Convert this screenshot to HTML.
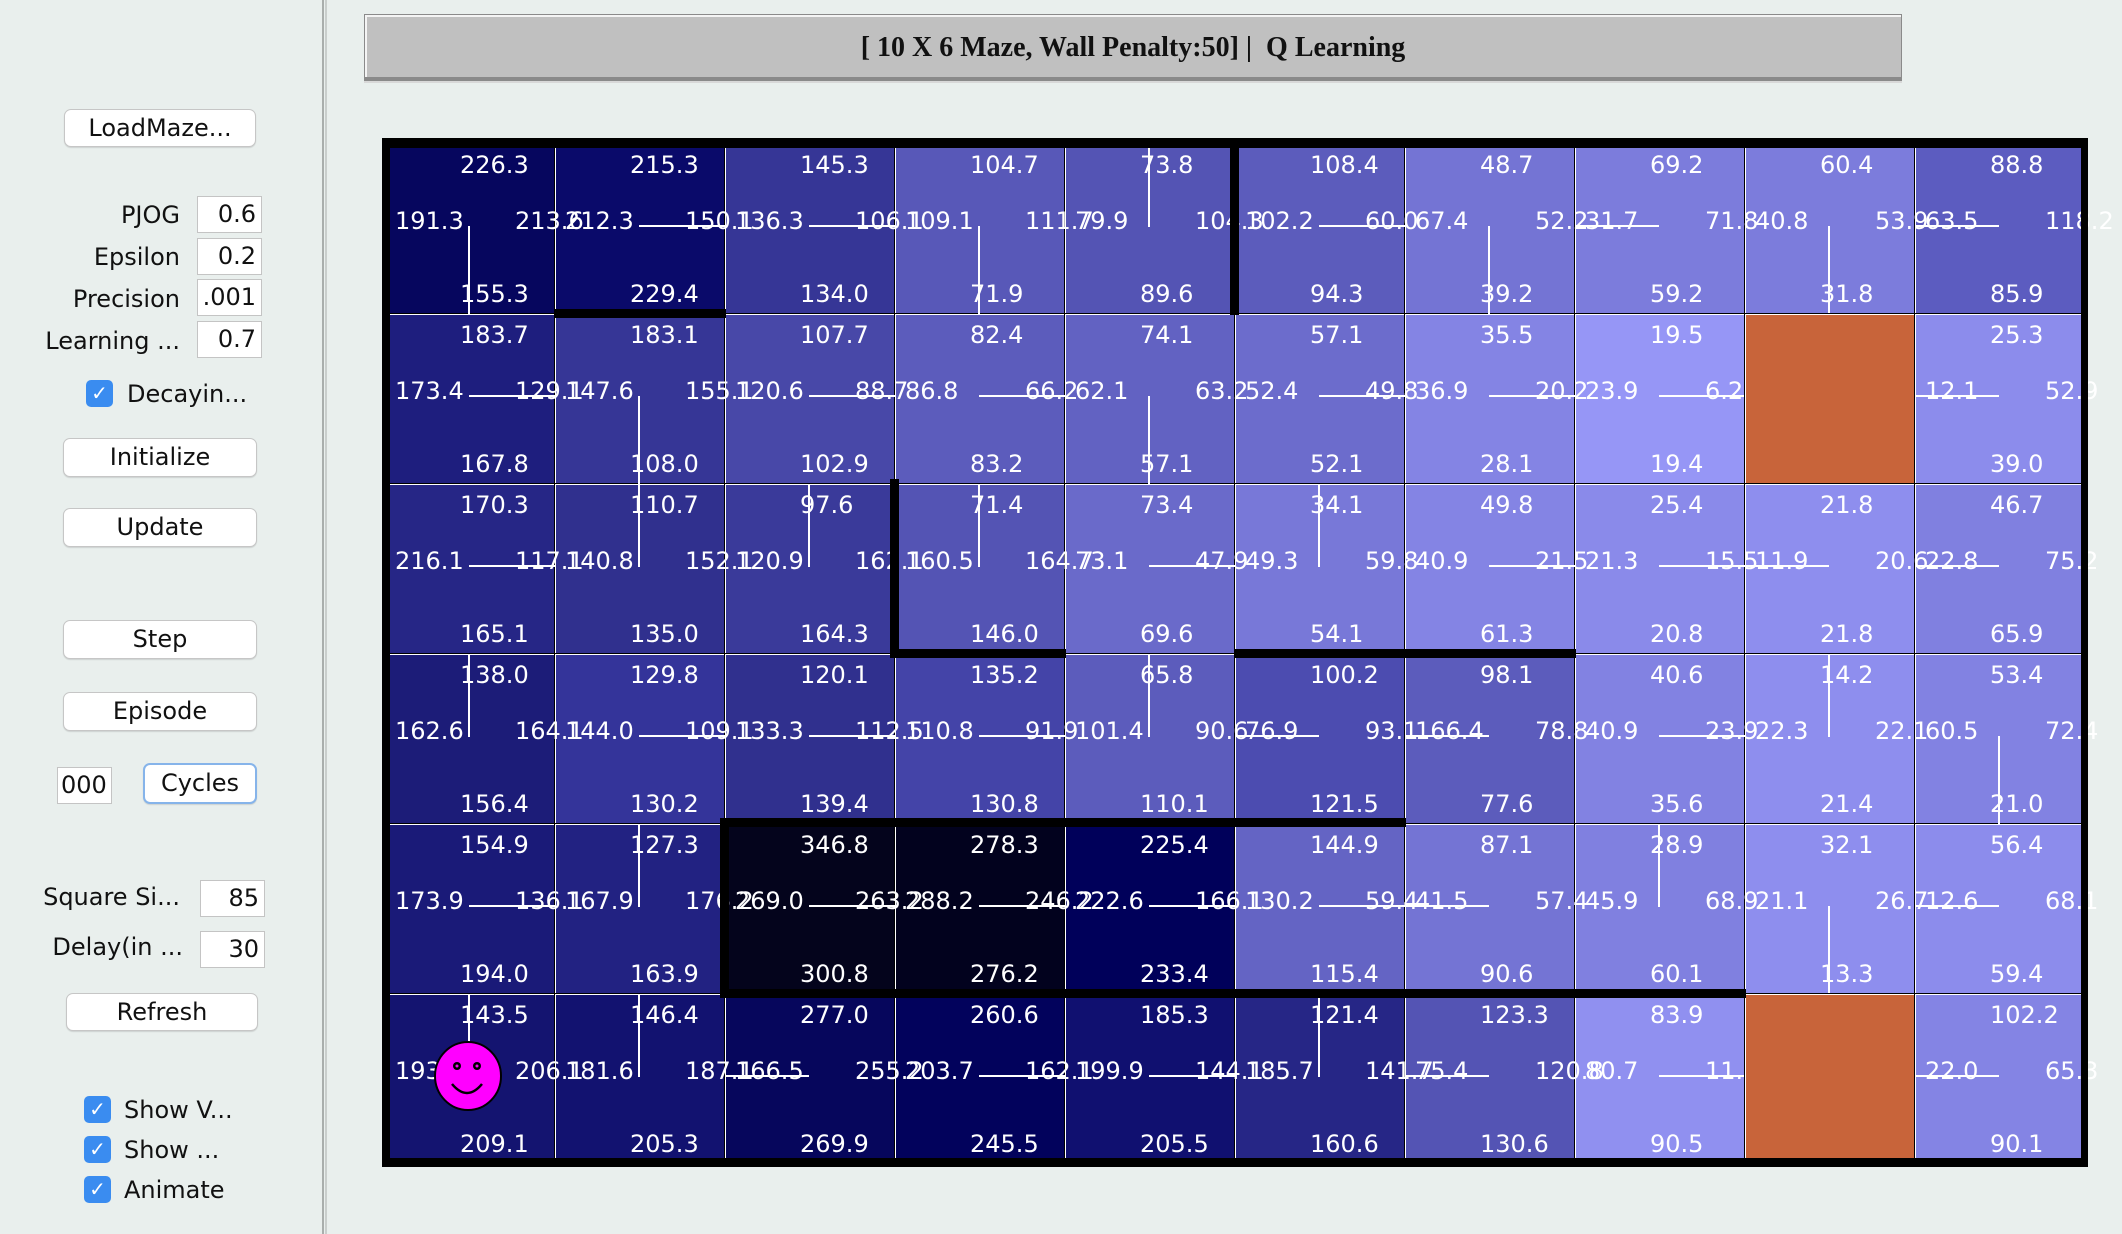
<!DOCTYPE html>
<html><head><meta charset="utf-8">
<style>
*{margin:0;padding:0;box-sizing:border-box}
body{width:2122px;height:1234px;background:#e9efed;position:relative;overflow:hidden;font-family:"DejaVu Sans","Liberation Sans",sans-serif;color:#111}
.a{position:absolute}
.btn{position:absolute;background:#fff;border:1px solid #c6c6c6;border-radius:7px;box-shadow:0 1px 1px rgba(0,0,0,.12);font-size:24px;text-align:center;line-height:37px}
.lab{position:absolute;font-size:24px;text-align:right;width:170px;left:10px;line-height:28px}
.fld{position:absolute;background:#fff;border:1px solid #c4c4c4;font-size:24px;text-align:right;padding-right:5px;line-height:34px;overflow:hidden;white-space:nowrap}
.cb{position:absolute;width:27px;height:27px;border-radius:5px;background:#3a8cf0;color:#fff;font-size:20px;line-height:27px;text-align:center;font-weight:bold}
.cbt{position:absolute;font-size:24px;line-height:28px}
#g{position:absolute;left:384px;top:143px;display:grid;grid-template-columns:repeat(10,170px);grid-auto-rows:170px}
.c{position:relative;border-left:1px solid #000;border-top:1px solid #000;box-shadow:inset 1px 1px 0 #fff}
.c i{position:absolute;z-index:2;font-style:normal;color:#fff;font-size:24px;line-height:24px;white-space:nowrap}
.t{left:75px;top:9px}.b{left:75px;top:138px}.l{left:10px;top:65px}.r{left:130px;top:65px}
.c b{position:absolute;z-index:2;background:#fff}
.U{left:83px;top:0;width:2px;height:83px}
.D{left:83px;top:82px;width:2px;height:88px}
.R{left:84px;top:81px;width:86px;height:2px}
.L{left:0;top:81px;width:84px;height:2px}
.o{background:#c8643a!important;z-index:3;position:relative}
.w{position:absolute;background:#000;z-index:5}
</style></head><body>
<div class="a" style="left:322px;top:0;width:2px;height:1234px;background:#a9aeac"></div>
<div class="a" style="left:325px;top:0;width:2px;height:1234px;background:#c9cecc"></div>

<div class="btn" style="left:64px;top:109px;width:192px;height:38px">LoadMaze...</div>
<div class="lab" style="top:201px">PJOG</div>
<div class="fld" style="left:197px;top:196px;width:65px;height:37px">0.6</div>
<div class="lab" style="top:243px">Epsilon</div>
<div class="fld" style="left:197px;top:238px;width:65px;height:37px">0.2</div>
<div class="lab" style="top:285px">Precision</div>
<div class="fld" style="left:197px;top:279px;width:65px;height:37px">.001</div>
<div class="lab" style="top:327px">Learning ...</div>
<div class="fld" style="left:197px;top:321px;width:65px;height:37px">0.7</div>
<div class="cb" style="left:86px;top:380px">✓</div>
<div class="cbt" style="left:127px;top:380px">Decayin...</div>
<div class="btn" style="left:63px;top:438px;width:194px;height:39px">Initialize</div>
<div class="btn" style="left:63px;top:508px;width:194px;height:39px">Update</div>
<div class="btn" style="left:63px;top:620px;width:194px;height:39px">Step</div>
<div class="btn" style="left:63px;top:692px;width:194px;height:39px">Episode</div>
<div class="fld" style="left:57px;top:767px;width:55px;height:37px;text-align:left;padding-left:3px">000</div>
<div class="btn" style="left:143px;top:763px;width:114px;height:41px;border:2px solid #86b4ea;line-height:37px">Cycles</div>
<div class="lab" style="top:883px">Square Si...</div>
<div class="fld" style="left:200px;top:880px;width:65px;height:37px">85</div>
<div class="lab" style="top:933px;left:13px">Delay(in ...</div>
<div class="fld" style="left:200px;top:931px;width:65px;height:37px">30</div>
<div class="btn" style="left:66px;top:993px;width:192px;height:38px">Refresh</div>
<div class="cb" style="left:84px;top:1096px">✓</div>
<div class="cbt" style="left:124px;top:1096px">Show V...</div>
<div class="cb" style="left:84px;top:1136px">✓</div>
<div class="cbt" style="left:124px;top:1136px">Show ...</div>
<div class="cb" style="left:84px;top:1176px">✓</div>
<div class="cbt" style="left:124px;top:1176px">Animate</div>

<div class="a" style="left:364px;top:14px;width:1538px;height:64px;background:#c0c0c0;border:1px solid #8a8a8a;box-shadow:inset 2px 2px 0 #f4f4f4"></div>
<div class="a" style="left:364px;top:78px;width:1538px;height:3px;background:#8a8a8a"></div>
<div class="a" style="left:364px;top:81px;width:1538px;height:2px;background:#d8d8d8"></div>
<div class="a" style="left:364px;top:31px;width:1538px;text-align:center;font-family:'Liberation Serif',serif;font-weight:bold;font-size:28px;line-height:34px;color:#111">[ 10 X 6 Maze, Wall Penalty:50] |&nbsp; Q Learning</div>

<div id="g">
<div class="c" style="background:#06065e"><i class="t">226.3</i><i class="l">191.3</i><i class="r">213.6</i><i class="b">155.3</i><b class="D"></b></div>
<div class="c" style="background:#0a0a6a"><i class="t">215.3</i><i class="l">212.3</i><i class="r">150.1</i><i class="b">229.4</i><b class="R"></b></div>
<div class="c" style="background:#363696"><i class="t">145.3</i><i class="l">136.3</i><i class="r">106.1</i><i class="b">134.0</i><b class="R"></b></div>
<div class="c" style="background:#5858b8"><i class="t">104.7</i><i class="l">109.1</i><i class="r">111.7</i><i class="b">71.9</i><b class="D"></b></div>
<div class="c" style="background:#5454b4"><i class="t">73.8</i><i class="l">79.9</i><i class="r">104.3</i><i class="b">89.6</i><b class="U"></b></div>
<div class="c" style="background:#5c5cbc"><i class="t">108.4</i><i class="l">102.2</i><i class="r">60.0</i><i class="b">94.3</i><b class="R"></b></div>
<div class="c" style="background:#7474d4"><i class="t">48.7</i><i class="l">67.4</i><i class="r">52.2</i><i class="b">39.2</i><b class="D"></b></div>
<div class="c" style="background:#7c7cdc"><i class="t">69.2</i><i class="l">31.7</i><i class="r">71.8</i><i class="b">59.2</i><b class="L"></b></div>
<div class="c" style="background:#7c7cdc"><i class="t">60.4</i><i class="l">40.8</i><i class="r">53.9</i><i class="b">31.8</i><b class="D"></b></div>
<div class="c" style="background:#5c5cc0"><i class="t">88.8</i><i class="l">63.5</i><i class="r">118.2</i><i class="b">85.9</i><b class="L"></b></div>

<div class="c" style="background:#1e1e7e"><i class="t">183.7</i><i class="l">173.4</i><i class="r">129.1</i><i class="b">167.8</i><b class="R"></b></div>
<div class="c" style="background:#363696"><i class="t">183.1</i><i class="l">147.6</i><i class="r">155.1</i><i class="b">108.0</i><b class="D"></b></div>
<div class="c" style="background:#4848a8"><i class="t">107.7</i><i class="l">120.6</i><i class="r">88.7</i><i class="b">102.9</i><b class="R"></b></div>
<div class="c" style="background:#5c5cbc"><i class="t">82.4</i><i class="l">86.8</i><i class="r">66.2</i><i class="b">83.2</i><b class="R"></b></div>
<div class="c" style="background:#6262c2"><i class="t">74.1</i><i class="l">62.1</i><i class="r">63.2</i><i class="b">57.1</i><b class="D"></b></div>
<div class="c" style="background:#6c6ccc"><i class="t">57.1</i><i class="l">52.4</i><i class="r">49.8</i><i class="b">52.1</i><b class="R"></b></div>
<div class="c" style="background:#8484e4"><i class="t">35.5</i><i class="l">36.9</i><i class="r">20.2</i><i class="b">28.1</i><b class="R"></b></div>
<div class="c" style="background:#9696f6"><i class="t">19.5</i><i class="l">23.9</i><i class="r">6.2</i><i class="b">19.4</i><b class="R"></b></div>
<div class="c o"></div>
<div class="c" style="background:#8c8cec"><i class="t">25.3</i><i class="l">12.1</i><i class="r">52.9</i><i class="b">39.0</i><b class="L"></b></div>

<div class="c" style="background:#262686"><i class="t">170.3</i><i class="l">216.1</i><i class="r">117.1</i><i class="b">165.1</i><b class="R"></b></div>
<div class="c" style="background:#30308e"><i class="t">110.7</i><i class="l">140.8</i><i class="r">152.1</i><i class="b">135.0</i><b class="U"></b></div>
<div class="c" style="background:#3a3a9a"><i class="t">97.6</i><i class="l">120.9</i><i class="r">162.1</i><i class="b">164.3</i><b class="U"></b></div>
<div class="c" style="background:#5454b4"><i class="t">71.4</i><i class="l">160.5</i><i class="r">164.7</i><i class="b">146.0</i><b class="U"></b></div>
<div class="c" style="background:#6a6aca"><i class="t">73.4</i><i class="l">73.1</i><i class="r">47.9</i><i class="b">69.6</i><b class="R"></b></div>
<div class="c" style="background:#7878d8"><i class="t">34.1</i><i class="l">49.3</i><i class="r">59.8</i><i class="b">54.1</i><b class="U"></b></div>
<div class="c" style="background:#8484e4"><i class="t">49.8</i><i class="l">40.9</i><i class="r">21.5</i><i class="b">61.3</i><b class="R"></b></div>
<div class="c" style="background:#8a8aea"><i class="t">25.4</i><i class="l">21.3</i><i class="r">15.5</i><i class="b">20.8</i><b class="R"></b></div>
<div class="c" style="background:#8e8eee"><i class="t">21.8</i><i class="l">11.9</i><i class="r">20.6</i><i class="b">21.8</i><b class="L"></b></div>
<div class="c" style="background:#8080e0"><i class="t">46.7</i><i class="l">22.8</i><i class="r">75.2</i><i class="b">65.9</i><b class="L"></b></div>

<div class="c" style="background:#1c1c78"><i class="t">138.0</i><i class="l">162.6</i><i class="r">164.1</i><i class="b">156.4</i><b class="U"></b></div>
<div class="c" style="background:#34349a"><i class="t">129.8</i><i class="l">144.0</i><i class="r">109.1</i><i class="b">130.2</i><b class="R"></b></div>
<div class="c" style="background:#30308e"><i class="t">120.1</i><i class="l">133.3</i><i class="r">112.5</i><i class="b">139.4</i><b class="R"></b></div>
<div class="c" style="background:#4444a8"><i class="t">135.2</i><i class="l">110.8</i><i class="r">91.9</i><i class="b">130.8</i><b class="R"></b></div>
<div class="c" style="background:#5c5cbc"><i class="t">65.8</i><i class="l">101.4</i><i class="r">90.6</i><i class="b">110.1</i><b class="U"></b></div>
<div class="c" style="background:#4c4cb0"><i class="t">100.2</i><i class="l">76.9</i><i class="r">93.1</i><i class="b">121.5</i><b class="L"></b></div>
<div class="c" style="background:#5c5cbc"><i class="t">98.1</i><i class="l">166.4</i><i class="r">78.8</i><i class="b">77.6</i><b class="L"></b></div>
<div class="c" style="background:#8282e2"><i class="t">40.6</i><i class="l">40.9</i><i class="r">23.9</i><i class="b">35.6</i><b class="R"></b></div>
<div class="c" style="background:#8e8eee"><i class="t">14.2</i><i class="l">22.3</i><i class="r">22.1</i><i class="b">21.4</i><b class="U"></b></div>
<div class="c" style="background:#8282e2"><i class="t">53.4</i><i class="l">60.5</i><i class="r">72.4</i><i class="b">21.0</i><b class="D"></b></div>

<div class="c" style="background:#1a1a78"><i class="t">154.9</i><i class="l">173.9</i><i class="r">136.1</i><i class="b">194.0</i><b class="R"></b></div>
<div class="c" style="background:#222282"><i class="t">127.3</i><i class="l">167.9</i><i class="r">176.2</i><i class="b">163.9</i><b class="U"></b></div>
<div class="c" style="background:#04041c"><i class="t">346.8</i><i class="l">269.0</i><i class="r">263.2</i><i class="b">300.8</i><b class="R"></b></div>
<div class="c" style="background:#02021e"><i class="t">278.3</i><i class="l">288.2</i><i class="r">246.2</i><i class="b">276.2</i><b class="R"></b></div>
<div class="c" style="background:#00005a"><i class="t">225.4</i><i class="l">222.6</i><i class="r">166.1</i><i class="b">233.4</i><b class="R"></b></div>
<div class="c" style="background:#6464c4"><i class="t">144.9</i><i class="l">130.2</i><i class="r">59.4</i><i class="b">115.4</i><b class="R"></b></div>
<div class="c" style="background:#7474d4"><i class="t">87.1</i><i class="l">41.5</i><i class="r">57.4</i><i class="b">90.6</i><b class="L"></b></div>
<div class="c" style="background:#8080e0"><i class="t">28.9</i><i class="l">45.9</i><i class="r">68.9</i><i class="b">60.1</i><b class="U"></b></div>
<div class="c" style="background:#8e8eee"><i class="t">32.1</i><i class="l">21.1</i><i class="r">26.7</i><i class="b">13.3</i><b class="D"></b></div>
<div class="c" style="background:#8c8cec"><i class="t">56.4</i><i class="l">12.6</i><i class="r">68.1</i><i class="b">59.4</i><b class="L"></b></div>

<div class="c" style="background:#141470"><i class="t">143.5</i><i class="l">193.2</i><i class="r">206.1</i><i class="b">209.1</i><b class="U"></b></div>
<div class="c" style="background:#121270"><i class="t">146.4</i><i class="l">181.6</i><i class="r">187.1</i><i class="b">205.3</i><b class="U"></b></div>
<div class="c" style="background:#06065c"><i class="t">277.0</i><i class="l">166.5</i><i class="r">255.2</i><i class="b">269.9</i><b class="L"></b></div>
<div class="c" style="background:#02025c"><i class="t">260.6</i><i class="l">203.7</i><i class="r">162.1</i><i class="b">245.5</i><b class="R"></b></div>
<div class="c" style="background:#101070"><i class="t">185.3</i><i class="l">199.9</i><i class="r">144.1</i><i class="b">205.5</i><b class="R"></b></div>
<div class="c" style="background:#262686"><i class="t">121.4</i><i class="l">185.7</i><i class="r">141.7</i><i class="b">160.6</i><b class="U"></b></div>
<div class="c" style="background:#5454b4"><i class="t">123.3</i><i class="l">75.4</i><i class="r">120.8</i><i class="b">130.6</i><b class="L"></b></div>
<div class="c" style="background:#9090f0"><i class="t">83.9</i><i class="l">80.7</i><i class="r">11.1</i><i class="b">90.5</i><b class="R"></b></div>
<div class="c o"></div>
<div class="c" style="background:#8484e4"><i class="t">102.2</i><i class="l">22.0</i><i class="r">65.3</i><i class="b">90.1</i><b class="L"></b></div>
</div>

<div class="w" style="left:382px;top:138px;width:1706px;height:10px"></div>
<div class="w" style="left:382px;top:1158px;width:1706px;height:9px"></div>
<div class="w" style="left:382px;top:138px;width:8px;height:1029px"></div>
<div class="w" style="left:2081px;top:138px;width:7px;height:1029px"></div>
<div class="w" style="left:1230px;top:143px;width:9px;height:172px"></div>
<div class="w" style="left:554px;top:309px;width:172px;height:9px"></div>
<div class="w" style="left:890px;top:479px;width:9px;height:178px"></div>
<div class="w" style="left:890px;top:649px;width:176px;height:9px"></div>
<div class="w" style="left:1234px;top:649px;width:342px;height:9px"></div>
<div class="w" style="left:720px;top:818px;width:686px;height:9px"></div>
<div class="w" style="left:720px;top:818px;width:9px;height:180px"></div>
<div class="w" style="left:720px;top:989px;width:1026px;height:9px"></div>

<svg class="a" style="left:430px;top:1036px;z-index:6" width="76" height="80" viewBox="0 0 76 80">
<ellipse cx="38" cy="40" rx="33" ry="34" fill="#ff00ff" stroke="#000" stroke-width="2"/>
<circle cx="27" cy="30" r="4" fill="#000"/><circle cx="27" cy="30" r="1.5" fill="#ff00ff"/>
<circle cx="47" cy="30" r="4" fill="#000"/><circle cx="47" cy="30" r="1.5" fill="#ff00ff"/>
<path d="M22 48 Q37 66 52 48" fill="none" stroke="#000" stroke-width="2.5"/>
</svg>
</body></html>
